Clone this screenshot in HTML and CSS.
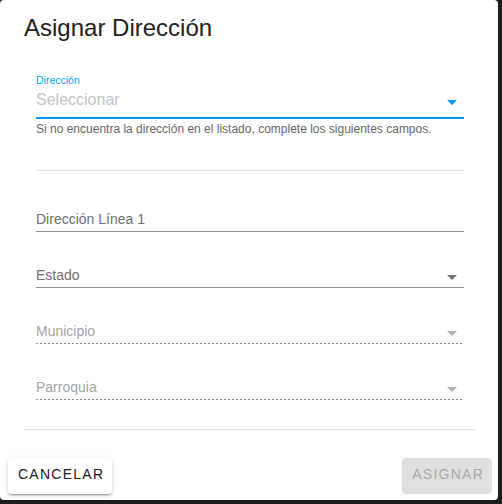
FILE: index.html
```html
<!DOCTYPE html>
<html lang="es">
<head>
<meta charset="utf-8">
<title>Asignar Dirección</title>
<link rel="stylesheet" href="styles.css">
</head>
<body>
<div class="dialog">
  <h2 class="title">Asignar Dirección</h2>
  <div class="content">
    <div class="form">
      <div class="field field-select focused">
        <div class="float-label">Dirección</div>
        <div class="control">
          <span class="value placeholder">Seleccionar</span>
          <span class="arrow arrow-top"></span>
        </div>
        <div class="underline underline-focus"></div>
        <div class="hint">Si no encuentra la dirección en el listado, complete los siguientes campos.</div>
      </div>
      <div class="sep"></div>
      <div class="field">
        <div class="control">
          <span class="value">Dirección Línea 1</span>
        </div>
        <div class="underline"></div>
      </div>
      <div class="field">
        <div class="control">
          <span class="value">Estado</span>
          <span class="arrow"></span>
        </div>
        <div class="underline"></div>
      </div>
      <div class="field disabled">
        <div class="control">
          <span class="value">Municipio</span>
          <span class="arrow"></span>
        </div>
        <div class="underline underline-dotted"></div>
      </div>
      <div class="field disabled">
        <div class="control">
          <span class="value">Parroquia</span>
          <span class="arrow"></span>
        </div>
        <div class="underline underline-dotted"></div>
      </div>
    </div>
    <div class="divider"></div>
  </div>
  <div class="actions">
    <button class="btn btn-raised">CANCELAR</button>
    <button class="btn btn-disabled" disabled>ASIGNAR</button>
  </div>
</div>
</body>
</html>
```

FILE: styles.css
```css
* { box-sizing: border-box; }

html, body {
  margin: 0;
  padding: 0;
}

body {
  background: #1c1c1c;
  font-family: "Liberation Sans", Arial, sans-serif;
  width: 502px;
  height: 504px;
  overflow: hidden;
}

.dialog {
  width: 498px;
  height: 500px;
  background: #ffffff;
  border-radius: 4px;
  overflow: hidden;
}

.title {
  margin: 0;
  padding: 12px 24px 0 24px;
  height: 46px;
  font-size: 24px;
  line-height: 32px;
  font-weight: 400;
  color: #212121;
}

.content {
  padding: 0 22px 0 24px;
}

.form {
  padding: 0 12px;
}

.field {
  display: flex;
  flex-direction: column;
  margin-bottom: 33px;
}

.field-select {
  padding-top: 28px;
  margin-bottom: 0;
}

.float-label {
  height: 12px;
  line-height: 12px;
  font-size: 10.5px;
  color: #03a9f4;
}

.control {
  display: flex;
  align-items: center;
  height: 22px;
  padding-bottom: 2px;
}

.field-select .control {
  height: 28px;
  padding-bottom: 0;
}

.value {
  flex: 1;
  font-size: 14px;
  color: #6e6e6e;
  white-space: nowrap;
}

.value.placeholder {
  font-size: 16px;
  color: #c4c4c4;
}

.disabled .value {
  color: #a3a3a3;
}

.arrow {
  width: 0;
  height: 0;
  border-left: 5px solid transparent;
  border-right: 5px solid transparent;
  border-top: 5px solid #757575;
  margin-right: 7px;
  margin-top: 5px;
}

.arrow-top {
  border-top-color: #039be5;
  margin-top: 5px;
}

.disabled .arrow {
  border-top-color: #b3b3b3;
}

.underline {
  height: 1px;
  background: #8f8f8f;
}

.field-select .control + .underline {
  margin-top: 3px;
}

.underline-focus {
  height: 2px;
  background: #039be5;
}

.underline-dotted {
  background: transparent;
  background-image: linear-gradient(to right, #8f8f8f 0%, #8f8f8f 50%, transparent 50%);
  background-size: 4px 1px;
  background-repeat: repeat-x;
}

.hint {
  margin-top: 3px;
  font-size: 12px;
  line-height: 14px;
  color: #666666;
  white-space: nowrap;
}

.sep {
  margin-top: 34px;
  margin-bottom: 38px;
  height: 1px;
  background: #e0e0e0;
}

.divider {
  height: 1px;
  background: #e0e0e0;
  margin-top: -4px;
}

.actions {
  display: flex;
  justify-content: space-between;
  padding: 28px 6px 0 8px;
}

.btn {
  font-family: "Liberation Sans", Arial, sans-serif;
  height: 36px;
  font-size: 14px;
  line-height: 32px;
  padding: 0 8px 4px 10px;
  letter-spacing: 1.25px;
  font-weight: 400;
  border: none;
  border-radius: 4px;
  margin: 0;
}

.btn-raised {
  background: #ffffff;
  color: #212121;
  box-shadow: 0 3px 1px -2px rgba(0,0,0,.2), 0 2px 2px 0 rgba(0,0,0,.14), 0 1px 5px 0 rgba(0,0,0,.12);
}

.btn-disabled {
  background: #e0e0e0;
  color: #a8a8a8;
}
```
